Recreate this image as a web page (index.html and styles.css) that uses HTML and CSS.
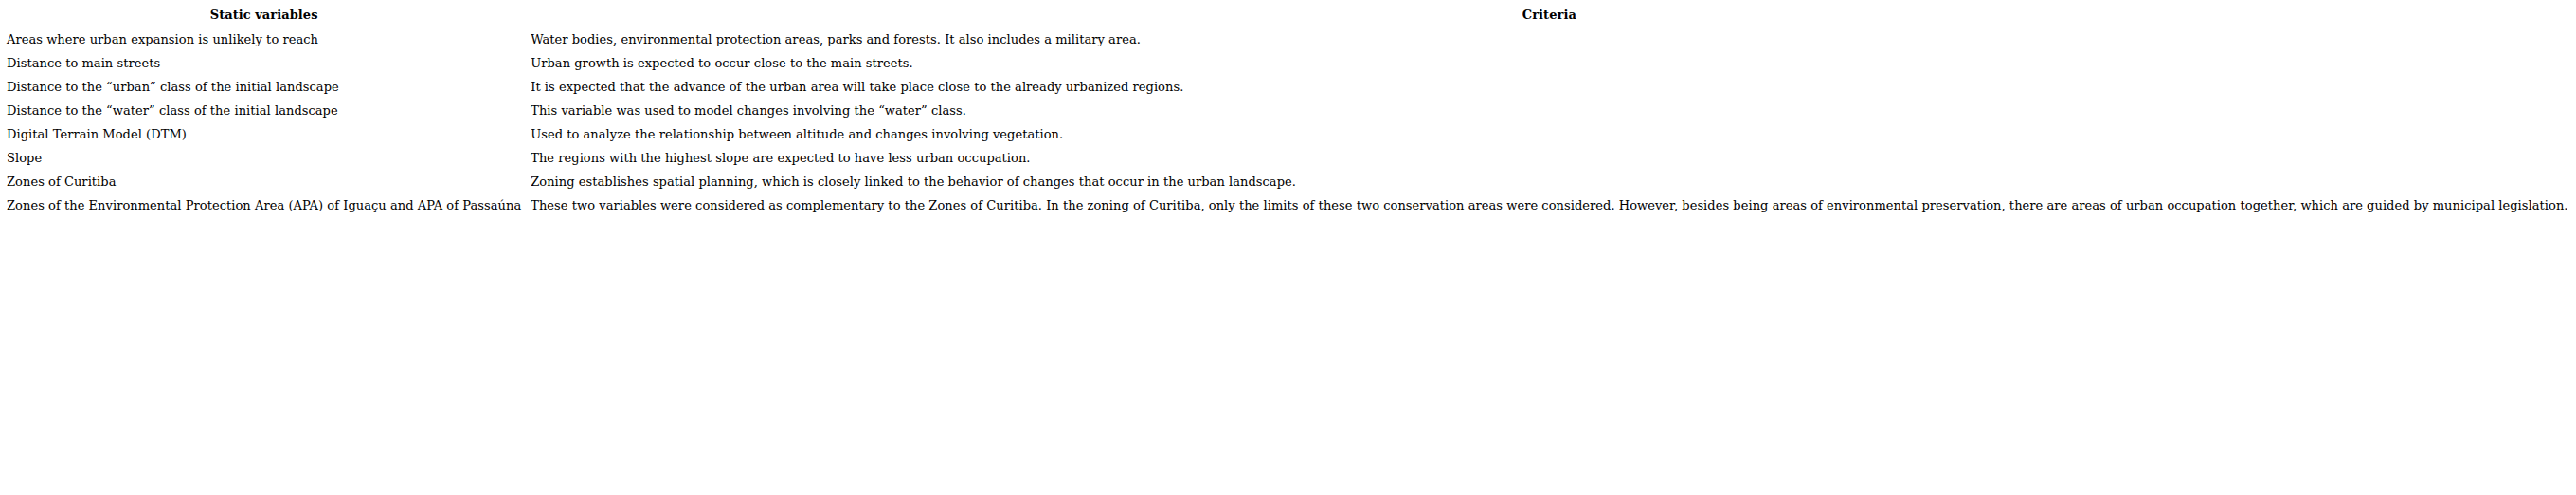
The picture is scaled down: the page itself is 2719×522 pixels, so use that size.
FILE: index.html
```html
<!DOCTYPE html>
<html lang="en">
<head>
<meta charset="utf-8">
<title>Static variables and criteria</title>
<link rel="stylesheet" href="styles.css">
</head>
<body>
<table class="vars">
  <thead>
    <tr><th>Static variables</th><th>Criteria</th></tr>
  </thead>
  <tbody>
    <tr><td>Areas where urban expansion is unlikely to reach</td><td>Water bodies, environmental protection areas, parks and forests. It also includes a military area.</td></tr>
    <tr><td>Distance to main streets</td><td>Urban growth is expected to occur close to the main streets.</td></tr>
    <tr><td>Distance to the “urban” class of the initial landscape</td><td>It is expected that the advance of the urban area will take place close to the already urbanized regions.</td></tr>
    <tr><td>Distance to the “water” class of the initial landscape</td><td>This variable was used to model changes involving the “water” class.</td></tr>
    <tr><td>Digital Terrain Model (DTM)</td><td>Used to analyze the relationship between altitude and changes involving vegetation.</td></tr>
    <tr><td>Slope</td><td>The regions with the highest slope are expected to have less urban occupation.</td></tr>
    <tr><td>Zones of Curitiba</td><td>Zoning establishes spatial planning, which is closely linked to the behavior of changes that occur in the urban landscape.</td></tr>
    <tr><td>Zones of the Environmental Protection Area (APA) of Iguaçu and APA of Passaúna</td><td>These two variables were considered as complementary to the Zones of Curitiba. In the zoning of Curitiba, only the limits of these two conservation areas were considered. However, besides being areas of environmental preservation, there are areas of urban occupation together, which are guided by municipal legislation.</td></tr>
  </tbody>
</table>
</body>
</html>
```
FILE: styles.css
```css
html, body {
  margin: 0;
  padding: 0;
  background: #ffffff;
}
body {
  font-family: "DejaVu Serif", "Liberation Serif", serif;
  font-size: 13px;
  letter-spacing: 0.05px;
  color: #000000;
}
.vars {
  border-collapse: collapse;
  margin: 3px 0 0 2px;
  white-space: nowrap;
}
.vars th,
.vars td {
  line-height: 15px;
  padding: 5px 5px;
  text-align: left;
  vertical-align: top;
}
.vars th {
  text-align: center;
  font-weight: bold;
  padding-bottom: 6px;
}
```
